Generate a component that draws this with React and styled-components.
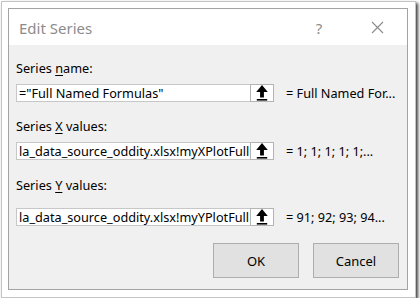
import React from "react";
import styled, { createGlobalStyle } from "styled-components";

const GlobalStyle = createGlobalStyle`
  html, body {
    margin: 0;
    padding: 0;
    background: #ffffff;
  }
  body {
    font-family: "Noto Sans", "Open Sans", sans-serif;
  }
`;

const rows = [
  {
    key: "n",
    pre: "Series ",
    rest: "ame:",
    value: '="Full Named Formulas"',
    result: "= Full Named For...",
    top: 0,
    gap: 7,
  },
  {
    key: "X",
    pre: "Series ",
    rest: " values:",
    value: "la_data_source_oddity.xlsx!myXPlotFull",
    result: "= 1; 1; 1; 1; 1;...",
    top: 15,
    gap: 7,
  },
  {
    key: "Y",
    pre: "Series ",
    rest: " values:",
    value: "la_data_source_oddity.xlsx!myYPlotFull",
    result: "= 91; 92; 93; 94...",
    top: 16,
    gap: 14,
  },
];

function RefIcon() {
  return (
    <svg width="12" height="16" viewBox="0 0 12 16">
      <path d="M6 0 L11.8 7 L7.9 7 L7.9 12.6 L4.1 12.6 L4.1 7 L0.2 7 Z" fill="#000" />
      <rect x="0.8" y="14" width="10.4" height="1.6" fill="#000" />
    </svg>
  );
}

function App() {
  return (
    <>
      <GlobalStyle />
      <Frame>
        <Dialog>
          <TitleBar>
            <Title>Edit Series</Title>
            <TitleButtons>
              <Help>?</Help>
              <Close>
                <svg width="13" height="13" viewBox="0 0 13 13">
                  <path d="M1 1 L12 12 M12 1 L1 12" stroke="#8a8a8a" strokeWidth="1.1" />
                </svg>
              </Close>
            </TitleButtons>
          </TitleBar>
          <Body>
            {rows.map((r) => (
              <Field key={r.key} $top={r.top} $gap={r.gap}>
                <Label>
                  {r.pre}
                  <u>{r.key}</u>
                  {r.rest}
                </Label>
                <InputRow>
                  <RefInput>
                    <InputText>{r.value}</InputText>
                    <RefButton>
                      <RefIcon />
                    </RefButton>
                  </RefInput>
                  <Result>{r.result}</Result>
                </InputRow>
              </Field>
            ))}
            <Actions>
              <Button>OK</Button>
              <Button>Cancel</Button>
            </Actions>
          </Body>
        </Dialog>
      </Frame>
    </>
  );
}

export default App;

const Frame = styled.div`
  margin: 1px 0 0 1px;
  width: 415px;
  height: 297px;
  border: 1px solid #c4c4c4;
  padding: 6px;
  box-sizing: border-box;
  box-shadow: 2px 2px 3px rgba(0, 0, 0, 0.75);
  background: #ffffff;
`;

const Dialog = styled.div`
  width: 400px;
  height: 282px;
  box-sizing: border-box;
  border: 1px solid #a3a3a3;
  display: flex;
  flex-direction: column;
  background: #f0f0f0;
`;

const TitleBar = styled.div`
  height: 36px;
  background: #ffffff;
  display: flex;
  align-items: center;
  justify-content: space-between;
  padding: 0 0 0 10px;
  flex-shrink: 0;
`;

const Title = styled.div`
  font-size: 15px;
  color: #8c8c8c;
  padding-top: 2px;
`;

const TitleButtons = styled.div`
  display: flex;
  align-items: center;
`;

const Help = styled.div`
  font-size: 15px;
  color: #8c8c8c;
  width: 20px;
  text-align: center;
  margin-right: 42px;
  padding-top: 2px;
`;

const Close = styled.div`
  width: 13px;
  height: 13px;
  margin-right: 23px;
  display: flex;
`;

const Body = styled.div`
  flex: 1;
  padding: 14px 8px 0 7px;
  display: flex;
  flex-direction: column;
`;

const Field = styled.div`
  display: flex;
  flex-direction: column;
  gap: ${(p) => p.$gap}px;
  margin-top: ${(p) => p.$top}px;
`;

const Label = styled.div`
  font-size: 12.7px;
  line-height: 18px;
  color: #000;
  u {
    text-decoration-thickness: 1px;
    text-underline-offset: 2px;
  }
`;

const InputRow = styled.div`
  display: flex;
  align-items: center;
  gap: 12px;
`;

const RefInput = styled.div`
  display: flex;
  height: 18px;
  width: 258px;
`;

const InputText = styled.div`
  flex: 1;
  min-width: 0;
  background: #fff;
  border: 1px solid #c7c7c7;
  border-right: none;
  font-size: 12.7px;
  line-height: 16px;
  padding-left: 2px;
  white-space: nowrap;
  overflow: hidden;
  color: #000;
`;

const RefButton = styled.div`
  width: 24px;
  flex-shrink: 0;
  box-sizing: border-box;
  background: #fff;
  border: 1px solid #b4b4b4;
  display: flex;
  align-items: center;
  justify-content: center;
`;

const Result = styled.div`
  font-size: 12.7px;
  color: #000;
  white-space: nowrap;
`;

const Actions = styled.div`
  display: flex;
  justify-content: flex-end;
  gap: 14px;
  margin-top: 17px;
`;

const Button = styled.div`
  width: 86px;
  height: 35px;
  box-sizing: border-box;
  background: #e1e1e1;
  border: 1px solid #adadad;
  display: flex;
  align-items: center;
  justify-content: center;
  font-size: 13px;
  color: #000;
`;
